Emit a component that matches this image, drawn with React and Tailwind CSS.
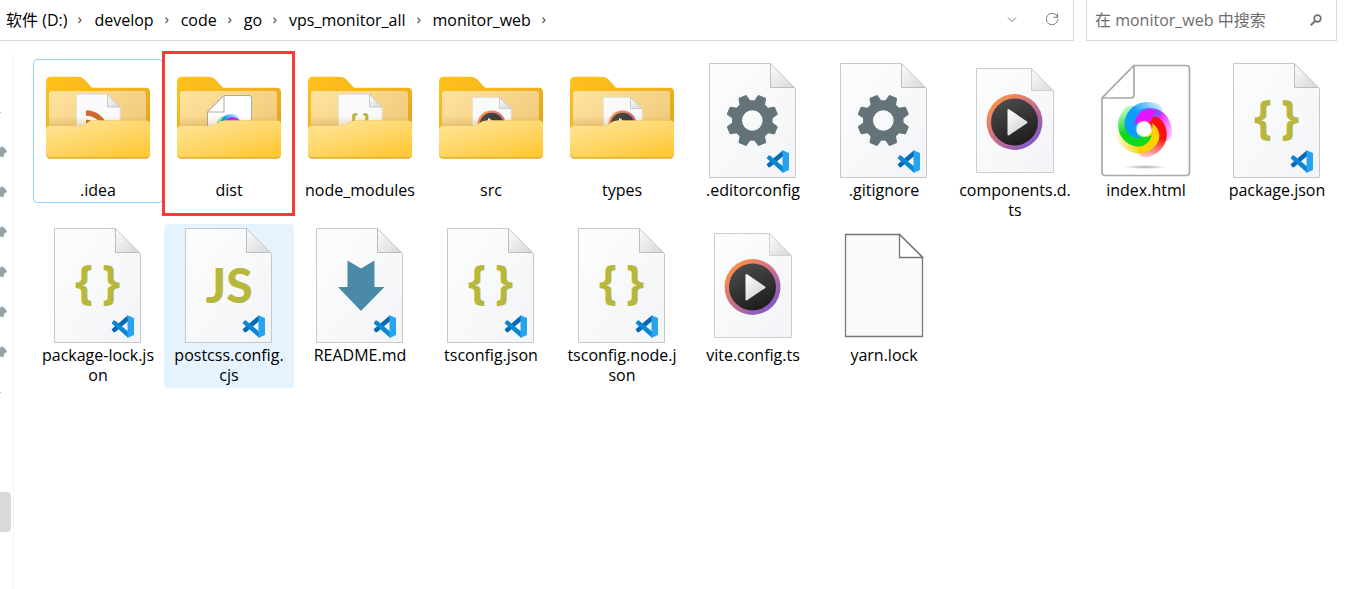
import React from "react";

const CRUMBS = ["软件 (D:)", "develop", "code", "go", "vps_monitor_all", "monitor_web"];

const ITEMS = [
  { lines: [".idea"], kind: "folder", inner: "feed", look: "focused" },
  { lines: ["dist"], kind: "folder", inner: "swirl", look: "marked" },
  { lines: ["node_modules"], kind: "folder", inner: "braces" },
  { lines: ["src"], kind: "folder", inner: "play" },
  { lines: ["types"], kind: "folder", inner: "play" },
  { lines: [".editorconfig"], kind: "gear" },
  { lines: [".gitignore"], kind: "gear" },
  { lines: ["components.d.", "ts"], kind: "play" },
  { lines: ["index.html"], kind: "swirl" },
  { lines: ["package.json"], kind: "braces" },
  { lines: ["package-lock.js", "on"], kind: "braces" },
  { lines: ["postcss.config.", "cjs"], kind: "js", look: "hovered" },
  { lines: ["README.md"], kind: "arrow" },
  { lines: ["tsconfig.json"], kind: "braces" },
  { lines: ["tsconfig.node.j", "son"], kind: "braces" },
  { lines: ["vite.config.ts"], kind: "play" },
  { lines: ["yarn.lock"], kind: "blank" },
];

const LOOKS = {
  focused: "border-[#99d1ff] rounded-sm",
  marked: "border-transparent",
  hovered: "border-[#e5f3ff] bg-[#e5f3ff] rounded-sm",
};

function Defs() {
  return (
    <svg className="absolute h-0 w-0" aria-hidden="true">
      <defs>
        <linearGradient id="folderBack" x1="0" y1="0" x2="1" y2="1">
          <stop offset="0" stopColor="#ffc21c" />
          <stop offset="0.5" stopColor="#f3b31e" />
          <stop offset="1" stopColor="#dda01c" />
        </linearGradient>
        <linearGradient id="folderInside" x1="0" y1="0" x2="1" y2="0.6">
          <stop offset="0" stopColor="#ffe3a0" />
          <stop offset="1" stopColor="#f0cb7c" />
        </linearGradient>
        <linearGradient id="folderFront" x1="0" y1="0" x2="0.7" y2="1">
          <stop offset="0" stopColor="#ffe59a" />
          <stop offset="0.5" stopColor="#ffd96f" />
          <stop offset="1" stopColor="#ffc93a" />
        </linearGradient>
        <linearGradient id="folderShade" x1="0" y1="0" x2="0" y2="1">
          <stop offset="0" stopColor="#b07a10" stopOpacity="0" />
          <stop offset="1" stopColor="#b07a10" stopOpacity="0.25" />
        </linearGradient>
        <linearGradient id="paper" x1="0" y1="0" x2="1" y2="1">
          <stop offset="0" stopColor="#fcfdfd" />
          <stop offset="1" stopColor="#f3f4f7" />
        </linearGradient>
        <linearGradient id="fold" x1="0" y1="0.3" x2="0.8" y2="1">
          <stop offset="0" stopColor="#f6f6f6" />
          <stop offset="1" stopColor="#d9dadb" />
        </linearGradient>
        <linearGradient id="ring" x1="0.1" y1="0.1" x2="0.8" y2="0.9">
          <stop offset="0" stopColor="#ff9440" />
          <stop offset="0.5" stopColor="#cf6f85" />
          <stop offset="1" stopColor="#8559c8" />
        </linearGradient>
        <linearGradient id="disc" x1="0" y1="0" x2="0.4" y2="1">
          <stop offset="0" stopColor="#505050" />
          <stop offset="1" stopColor="#202020" />
        </linearGradient>
        <linearGradient id="triangle" x1="0" y1="0" x2="0.6" y2="1">
          <stop offset="0" stopColor="#ffffff" />
          <stop offset="1" stopColor="#d4d4d4" />
        </linearGradient>
        <radialGradient id="shadow">
          <stop offset="0" stopColor="#888888" stopOpacity="0.7" />
          <stop offset="1" stopColor="#888888" stopOpacity="0" />
        </radialGradient>
        <radialGradient id="core">
          <stop offset="0" stopColor="#ffffff" />
          <stop offset="0.6" stopColor="#ffffff" />
          <stop offset="1" stopColor="#ffffff" stopOpacity="0" />
        </radialGradient>
        {SWIRL.map(([name, color]) => (
          <linearGradient key={name} id={name} gradientUnits="userSpaceOnUse" x1="-8" y1="-14" x2="30" y2="6">
            <stop offset="0" stopColor={color} />
            <stop offset="0.45" stopColor={color} />
            <stop offset="1" stopColor={color} stopOpacity="0.15" />
          </linearGradient>
        ))}
      </defs>
    </svg>
  );
}

const SWIRL = [
  ["armViolet", "#e514fb", 0],
  ["armRed", "#fb1010", 72],
  ["armYellow", "#fdd000", 144],
  ["armGreen", "#0bdb1c", 216],
  ["armBlue", "#0a9dfb", 288],
];

const ARM = "M-10 0C-14-12-6-21 5-21C19-21 29-10 28 6C26 13 20 14 16 9C13 0 9-5 3-7C-3-8-8-5-10 0Z";

function Swirl() {
  return (
    <g>
      {SWIRL.map(([name, , angle]) => (
        <path key={name} d={ARM} fill={`url(#${name})`} transform={`rotate(${angle})`} />
      ))}
      <path d="M-9-3C-10-12-4-19 6-20L12-18L6-7C-1-9-6-8-9-3Z" fill="url(#armViolet)" />
      <circle r="9" fill="url(#core)" />
    </g>
  );
}

function PlayDisc() {
  return (
    <g>
      <circle r="28" fill="url(#ring)" />
      <circle r="23.5" fill="url(#disc)" />
      <path d="M-6-12V12.500L12 .3Z" fill="url(#triangle)" stroke="url(#triangle)" strokeWidth="2" strokeLinejoin="round" />
    </g>
  );
}

function Paper() {
  return (
    <g>
      <path d="M20.500 3.500H81.500L106.500 28.500V117.500H20.500Z" fill="url(#paper)" stroke="#c6c8c9" />
      <path d="M81.500 3.500V27.500H106" fill="url(#fold)" stroke="#bcbdbe" />
      <path d="M81.500 3.500L106.500 28.500" stroke="#c6c8c9" fill="none" />
    </g>
  );
}

function MediaPaper() {
  return (
    <g>
      <path d="M25.500 8.500H80.500L102.500 31.500V112.500H25.500Z" fill="url(#paper)" stroke="#cccdce" />
      <path d="M80.500 8.500V30.500H102.500Z" fill="url(#fold)" stroke="#cfd0d1" />
    </g>
  );
}

function CodeBadge() {
  return (
    <g transform="translate(77 90)">
      <path d="M.6 14.300L2.400 17.200L4 17.200L17 6.300V.3Z" fill="#0569b3" />
      <path d="M.6 8.300L2.400 5.600L4 5.600L17 16.500V22.700Z" fill="#0a86d3" />
      <path d="M16.500.2L23 3V20L16.500 23Z" fill="#27a3f2" />
    </g>
  );
}

const TEETH = [22.5, 67.5, 112.5, 157.5, 202.5, 247.5, 292.5, 337.5];

function Gear() {
  return (
    <g transform="translate(63.300 60.500)" fill="#637378">
      {TEETH.map((angle) => (
        <path key={angle} d="M-6-18L-4.500-25Q-4.300-26-3.300-26H3.300Q4.300-26 4.500-25L6-18Z" transform={`rotate(${angle})`} />
      ))}
      <circle r="15.300" fill="none" stroke="#637378" strokeWidth="10" />
    </g>
  );
}

function Braces() {
  return (
    <g fill="#b7b73b" className="font-['Open_Sans','Noto_Sans',sans-serif] text-[46px] font-bold" textAnchor="middle">
      <text x="50" y="73">{"{"}</text>
      <text x="77" y="73">{"}"}</text>
    </g>
  );
}

function HtmlPaper() {
  return (
    <g>
      <path d="M52 5.500H104Q107.500 5.500 107.500 9V112Q107.500 115.500 104 115.500H23.500Q20 115.500 20 112V38Z" fill="#fff" stroke="#a9a9a9" strokeWidth="1.700" strokeLinejoin="round" />
      <path d="M52 5.500V35Q52 38 49 38H20Z" fill="#fff" stroke="#a9a9a9" strokeWidth="1.700" strokeLinejoin="round" />
    </g>
  );
}

function FolderInner({ inner }) {
  if (inner === "swirl") {
    return (
      <g>
        <path d="M59 35.500H84Q86.500 35.500 86.500 38V80H42.500V52Z" fill="#fff" stroke="#aaa" />
        <path d="M59 35.500V52H42.500Z" fill="#fff" stroke="#aaa" />
        <g transform="translate(64.500 67.500) scale(.5)">
          <Swirl />
        </g>
      </g>
    );
  }
  if (inner === "play") {
    return (
      <g>
        <path d="M45.500 37.500H72.500L84 48.500V80H45.500Z" fill="#fafafb" stroke="#e3e3e3" />
        <path d="M72.500 37.500V48.500H84Z" fill="url(#fold)" stroke="#c9c9c9" />
        <g transform="translate(64.500 64.500) scale(.5)">
          <PlayDisc />
        </g>
      </g>
    );
  }
  return (
    <g>
      <path d="M42.500 34.500H73.500L86 47V80H42.500Z" fill="#fafafb" stroke="#e3e3e3" />
      <path d="M73.500 34.500V47H86Z" fill="url(#fold)" stroke="#c9c9c9" />
      {inner === "feed" ? (
        <g fill="none" stroke="#cb6a2c" strokeWidth="5.500">
          <path d="M52 53A20 20 0 0 1 72 73" />
          <path d="M52 62.500A11 11 0 0 1 63 73" />
        </g>
      ) : (
        <g transform="translate(32.500 33) scale(.5)">
          <Braces />
        </g>
      )}
    </g>
  );
}

function Folder({ inner }) {
  return (
    <g>
      <path d="M12 22Q12 16.700 17 16.700H43Q47.500 16.700 50 19L58 27.700H111.500Q116 27.700 116 32V80H12Z" fill="url(#folderBack)" />
      <rect x="15" y="31" width="97" height="45" rx="2.500" fill="url(#folderInside)" />
      <FolderInner inner={inner} />
      <path d="M15 56H112V66H15Z" fill="url(#folderShade)" />
      <path d="M12 70Q12 66 16 66H44Q49 66 52 63.500Q55.500 60.500 60 60.500H112Q116 60.500 116 64.500V94Q116 98.700 111.500 98.700H16.500Q12 98.700 12 94Z" fill="#e6aa26" />
      <path d="M12 70Q12 66 16 66H44Q49 66 52 63.500Q55.500 60.500 60 60.500H112Q116 60.500 116 64.500V93Q116 97.300 111.500 97.300H16.500Q12 97.300 12 93Z" fill="url(#folderFront)" />
    </g>
  );
}

function Picture({ kind, inner }) {
  if (kind === "folder") return <Folder inner={inner} />;
  if (kind === "play") {
    return (
      <g>
        <MediaPaper />
        <g transform="translate(63.500 62)">
          <PlayDisc />
        </g>
      </g>
    );
  }
  if (kind === "swirl") {
    return (
      <g>
        <HtmlPaper />
        <ellipse cx="63" cy="107" rx="22" ry="2" fill="url(#shadow)" />
        <g transform="translate(62 69)">
          <Swirl />
        </g>
      </g>
    );
  }
  if (kind === "blank") {
    return (
      <g fill="#fafafa" stroke="#777" strokeWidth="1.300">
        <path d="M25.500 9.500H79.500L102.500 32V111.500H25.500Z" />
        <path d="M79.500 9.500V32.500H102.500Z" fill="#fff" />
      </g>
    );
  }
  return (
    <g>
      <Paper />
      {kind === "gear" && <Gear />}
      {kind === "braces" && <Braces />}
      {kind === "js" && (
        <text x="64" y="78" textAnchor="middle" fill="#b7b73b" className="font-['Lato',sans-serif] text-[48px] font-black">
          JS
        </text>
      )}
      {kind === "arrow" && <path d="M51.500 35.500L65 43.500L78.500 35.500V62H88.500L65 86L42 62H51.500Z" fill="#4a8aa8" />}
      <CodeBadge />
    </g>
  );
}

function Item({ lines, kind, inner, look }) {
  return (
    <li className="relative">
      <button type="button" className={`block w-full border pb-0.5 text-center ${look ? LOOKS[look] : "border-transparent"}`}>
        <svg viewBox="0 0 128 120" className="block h-[120px] w-full" aria-hidden="true">
          <Picture kind={kind} inner={inner} />
        </svg>
        {lines.map((line) => (
          <span key={line} className="block text-base leading-5 whitespace-nowrap">
            {line}
          </span>
        ))}
      </button>
      {look === "marked" && (
        <span className="pointer-events-none absolute -top-2 -left-0.5 h-[165px] w-[133px] border-3 border-[#f93a39]" />
      )}
    </li>
  );
}

function Header() {
  return (
    <header className="flex h-[41px] pr-2">
      <div className="flex min-w-0 flex-1 items-center border-r border-b border-[#d9d9d9] pl-1.5">
        <nav aria-label="Path" className="flex flex-1 items-center">
          {CRUMBS.map((crumb) => (
            <React.Fragment key={crumb}>
              <a href="#" className="text-base leading-5 whitespace-nowrap">
                {crumb}
              </a>
              <svg viewBox="0 0 27 10" className="h-2.5 w-[27px] shrink-0" aria-hidden="true">
                <path d="M11.500 2.500L14 5.300L11.500 8" fill="none" stroke="#666" strokeWidth="1.300" />
              </svg>
            </React.Fragment>
          ))}
        </nav>
        <button type="button" aria-label="Previous locations" className="px-5">
          <svg viewBox="0 0 10 10" className="h-2.5 w-2.5">
            <path d="M1 2.500L5 6.500L9 2.500" fill="none" stroke="#777" />
          </svg>
        </button>
        <button type="button" aria-label="Refresh" className="pr-3.5 pl-2">
          <svg viewBox="0 0 14 14" className="size-3.5">
            <path d="M12.500 4.200A5.700 5.700 0 1 0 12.800 6.200M12.600 .5V4.300H8.500" fill="none" stroke="#777" />
          </svg>
        </button>
      </div>
      <label className="ml-3 flex w-[251px] items-center border-x border-b border-[#d9d9d9] pr-3.5 pl-2">
        <input
          type="text"
          aria-label="Search"
          placeholder="在 monitor_web 中搜索"
          className="min-w-0 flex-1 bg-transparent text-base leading-5 outline-none placeholder:text-[#6d6d6d]"
        />
        <svg viewBox="0 0 12 12" className="size-3" aria-hidden="true">
          <circle cx="7.500" cy="4.500" r="3.300" fill="none" stroke="#6d6d6d" strokeWidth="1.700" />
          <path d="M5.200 6.900L.8 11.300" stroke="#6d6d6d" strokeWidth="2" />
        </svg>
      </label>
    </header>
  );
}

const TREE_ROWS = ["tick", "pin", "pin", "pin", "pin", "pin", "pin", "tick"];

function Sidebar() {
  return (
    <aside className="mt-3 w-3.5 shrink-0 border-r border-[#f5f5f5] pt-[39px]">
      {TREE_ROWS.map((row, i) => (
        <div key={i} className="flex h-10 items-center">
          {row === "pin" ? (
            <svg viewBox="0 0 8 14" className="h-3.5 w-2" aria-hidden="true">
              <path d="M0 3L1.300 1.700Q2.400.9 3.300 2.100L6.800 5.700Q7.300 7.200 6 7.600L4.500 8.300L3.500 11.300Q3 13 2 12.300L1.300 11.200L0 12Z" fill="#93a0a8" />
            </svg>
          ) : (
            <span className="h-px w-px bg-[#bbb]" />
          )}
        </div>
      ))}
      <div className="mt-20 h-10 w-[11px] rounded-r-sm bg-[#d9d9d9]" />
    </aside>
  );
}

export default function App() {
  return (
    <div className="flex min-h-screen flex-col bg-white font-['Open_Sans','Noto_Sans_CJK_SC',sans-serif] text-black">
      <Defs />
      <Header />
      <div className="flex flex-1">
        <Sidebar />
        <main className="min-w-0 flex-1 pt-[18px] pl-[19px]">
          <ul className="grid grid-cols-[repeat(auto-fill,130px)] items-start gap-px">
            {ITEMS.map((item) => (
              <Item key={item.lines.join("")} {...item} />
            ))}
          </ul>
        </main>
      </div>
    </div>
  );
}
